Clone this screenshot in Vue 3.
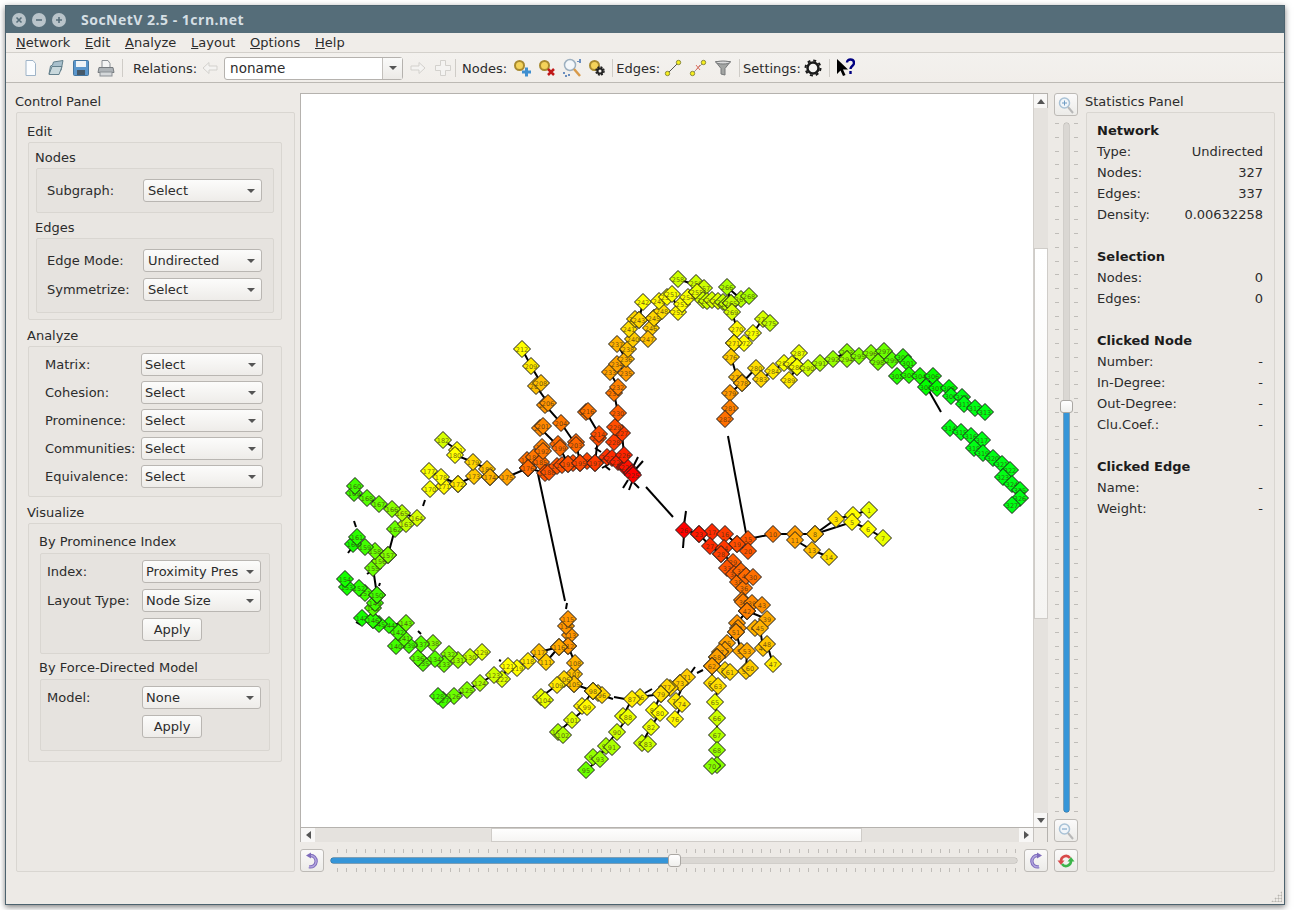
<template>
  <div class="window">
    <header class="titlebar">
      <span class="wbtn"><svg viewBox="0 0 14 14"><path d="M4.5 4.5l5 5M9.5 4.5l-5 5" /></svg></span>
      <span class="wbtn"><svg viewBox="0 0 14 14"><path d="M4 7h6" /></svg></span>
      <span class="wbtn"><svg viewBox="0 0 14 14"><path d="M4 7h6M7 4v6" /></svg></span>
      <span class="wtitle">SocNetV 2.5 - 1crn.net</span>
    </header>

    <nav class="menubar">
      <span v-for="m in menus" :key="m" class="menu"><u>{{ m[0] }}</u>{{ m.slice(1) }}</span>
    </nav>

    <div class="toolbar">
      <span class="grip"></span>
      <span class="ti"><svg width="16" height="18" viewBox="0 0 16 18"><path d="M3 1.500h7l2.500 3v12H3z" fill="#fbfdff" stroke="#9fb4c8" /></svg></span>
      <span class="ti"><svg width="18" height="18" viewBox="0 0 18 18"><path d="M2 15L3.500 7l2-1 1-3 9.500-1.500-2 10z" fill="#a9c0cc" stroke="#64808c" /><path d="M2 15.500l3-8h10l-3 8z" fill="#c9d8dc" stroke="#64808c" /></svg></span>
      <span class="ti"><svg width="18" height="18" viewBox="0 0 18 18"><rect x="1.500" y="1.500" width="15" height="15" rx="1" fill="#5a96cc" stroke="#44759f" /><rect x="4" y="2" width="10" height="6" fill="#eef3f7" /><rect x="5" y="11" width="8" height="5" fill="#45596a" /></svg></span>
      <span class="ti"><svg width="18" height="18" viewBox="0 0 18 18"><path d="M5 1.500h6l2 3v4H5z" fill="#f4f4f4" stroke="#8a8f94" /><path d="M2 8.500h14l1 5H1z" fill="#aeb3b7" stroke="#777c80" /><rect x="3" y="13" width="12" height="4" fill="#d5d8da" stroke="#8a8f94" /></svg></span>
      <span class="tsep s1"></span>
      <span class="tlabel">Relations:</span>
      <span class="ti"><svg width="16" height="14" viewBox="0 0 16 14"><path d="M1 7l6-5.500V5h8v4H7v3.500z" fill="#f4f3f1" stroke="#d3d1cd" /></svg></span>
      <div class="relcombo"><span class="reltext">noname</span><span class="relbtn"><i class="caret"></i></span></div>
      <span class="ti ml2"><svg width="16" height="14" viewBox="0 0 16 14"><path d="M15 7L9 1.500V5H1v4h8v3.500z" fill="#f4f3f1" stroke="#d3d1cd" /></svg></span>
      <span class="ti"><svg width="18" height="18" viewBox="0 0 18 18"><path d="M6.500 1.500h5v5h5v5h-5v5h-5v-5h-5v-5h5z" fill="#f4f3f1" stroke="#d3d1cd" /></svg></span>
      <span class="tsep s2"></span>
      <span class="tlabel">Nodes:</span>
      <span class="ti ml2"><svg width="18" height="18" viewBox="0 0 18 18"><circle cx="6.500" cy="6.500" r="4.500" fill="#f4d35a" stroke="#a88a30" stroke-width="2" /><path d="M9 11.500h3v-3h3v3h3v3h-3v3h-3v-3H9z" fill="#3f8fd0" /></svg></span>
      <span class="ti"><svg width="18" height="18" viewBox="0 0 18 18"><circle cx="6.500" cy="6.500" r="4.500" fill="#f4d35a" stroke="#a88a30" stroke-width="2" /><path d="M10 10l6 6M16 10l-6 6" stroke="#c01818" stroke-width="2.500" /></svg></span>
      <span class="ti"><svg width="20" height="20" viewBox="0 0 20 20"><circle cx="8" cy="7" r="5.500" fill="#f4f7fa" stroke="#9db0c0" stroke-width="1.500" /><path d="M12 11l6 7" stroke="#d89a4a" stroke-width="2.500" /><path d="M18 1v4M16 3v1M1 15h2M3 18h2M6 17h2" stroke="#3f6fb0" stroke-width="1.500" /></svg></span>
      <span class="ti"><svg width="18" height="18" viewBox="0 0 18 18"><circle cx="6.500" cy="6.500" r="4.500" fill="#f4d35a" stroke="#a88a30" stroke-width="2" /><circle cx="12" cy="12" r="2.500" fill="none" stroke="#222" stroke-width="2" /><circle cx="12" cy="12" r="4" fill="none" stroke="#222" stroke-width="1.500" stroke-dasharray="2 1.150" /></svg></span>
      <span class="tsep s3"></span>
      <span class="tlabel">Edges:</span>
      <span class="ti"><svg width="18" height="18" viewBox="0 0 18 18"><path d="M4 14L14 4" stroke="#555" /><circle cx="3.500" cy="14.500" r="2.200" fill="#f6ee1c" stroke="#8a8a40" /><circle cx="14.500" cy="3.500" r="2.200" fill="#f6ee1c" stroke="#8a8a40" /></svg></span>
      <span class="ti"><svg width="18" height="18" viewBox="0 0 18 18"><path d="M4 14L14 4" stroke="#999" /><path d="M7 6l4 5M11 6l-4 5" stroke="#e07060" /><circle cx="3.500" cy="14.500" r="2.200" fill="#f6ee1c" stroke="#8a8a40" /><circle cx="14.500" cy="3.500" r="2.200" fill="#f6ee1c" stroke="#8a8a40" /></svg></span>
      <span class="ti"><svg width="18" height="18" viewBox="0 0 18 18"><path d="M1.500 2.500h15L11 9.500V16l-4-1V9.500z" fill="#a3a5a3" stroke="#77797a" /><ellipse cx="9" cy="3.500" rx="7" ry="1.500" fill="#dcdcdc" stroke="#77797a" /></svg></span>
      <span class="tsep s4"></span>
      <span class="tlabel">Settings:</span>
      <span class="ti"><svg width="18" height="18" viewBox="0 0 18 18"><circle cx="9" cy="9" r="5.500" fill="#f4f3f1" stroke="#1a1a1a" stroke-width="2.500" /><circle cx="9" cy="9" r="7.500" fill="none" stroke="#1a1a1a" stroke-width="2" stroke-dasharray="3 2.890" /></svg></span>
      <span class="tsep s5"></span>
      <span class="ti"><svg width="20" height="20" viewBox="0 0 20 20"><path d="M2 1v15l3.500-3.500L8 18l2.500-1L8 11.500h5z" fill="#000" /><path d="M12 4.500c0-4 7-4 7 .5 0 3-3.500 3-3.500 6M15.500 13v3" fill="none" stroke="#000080" stroke-width="2.400" /></svg></span>
    </div>

    <main class="content">
      <section class="leftpane">
        <div class="panetitle">Control Panel</div>
        <div class="box outer">
          <div class="grouptitle first">Edit</div>
          <div class="box mid edit">
            <div class="subtitle">Nodes</div>
            <div class="box inner">
              <div class="row"><label>Subgraph:</label><div class="combo"><span>Select</span><i class="caret"></i></div></div>
            </div>
            <div class="subtitle gap">Edges</div>
            <div class="box inner tall">
              <div class="row"><label>Edge Mode:</label><div class="combo"><span>Undirected</span><i class="caret"></i></div></div>
              <div class="row"><label>Symmetrize:</label><div class="combo"><span>Select</span><i class="caret"></i></div></div>
            </div>
          </div>

          <div class="grouptitle">Analyze</div>
          <div class="box mid analyze">
            <div v-for="a in analyzeRows" :key="a" class="row">
              <label>{{ a }}:</label><div class="combo"><span>Select</span><i class="caret"></i></div>
            </div>
          </div>

          <div class="grouptitle">Visualize</div>
          <div class="box mid visualize">
            <div class="vistitle">By Prominence Index</div>
            <div class="box vis">
              <div class="row"><label>Index:</label><div class="combo"><span>Proximity Pres</span><i class="caret"></i></div></div>
              <div class="row"><label>Layout Type:</label><div class="combo"><span>Node Size</span><i class="caret"></i></div></div>
              <div class="row"><label></label><button class="apply">Apply</button></div>
            </div>
            <div class="vistitle gap">By Force-Directed Model</div>
            <div class="box vis">
              <div class="row"><label>Model:</label><div class="combo"><span>None</span><i class="caret"></i></div></div>
              <div class="row"><label></label><button class="apply">Apply</button></div>
            </div>
          </div>
        </div>
      </section>

      <section class="centerpane">
        <div class="viewrow">
          <div class="view">
            <div class="viewtop">
              <svg class="graph" viewBox="301 94 732 733" width="732" height="733">
                <g stroke="#000" stroke-width="2" fill="none">
                  <template v-for="(c, i) in chains" :key="'c' + i">
                    <polyline :points="c.map(n => n[0] + ',' + n[1]).join(' ')" />
                  </template>
                  <line v-for="(s, i) in stubs" :key="'s' + i" :x1="s[0]" :y1="s[1]" :x2="s[2]" :y2="s[3]" />
                </g>
                <g v-for="n in nodes" :key="n[0] + '-' + n[1] + '-' + n[3]">
                  <polygon :points="diamond(n)" :fill="'hsl(' + n[2] + ',100%,50%)'" stroke="#1c1c1c" stroke-width="1" />
                  <text :x="n[0]" :y="n[1] + 2.500" class="nlabel">{{ n[3] }}</text>
                </g>
              </svg>
              <div class="vscroll">
                <span class="sbtn"><i class="arr up"></i></span>
                <span class="trough t1"></span>
                <span class="thumb t2"></span>
                <span class="trough t3"></span>
                <span class="sbtn"><i class="arr down"></i></span>
              </div>
            </div>
            <div class="hscroll">
              <span class="sbtn"><i class="arr left"></i></span>
              <span class="trough h1"></span>
              <span class="thumb h2"></span>
              <span class="trough h3"></span>
              <span class="sbtn"><i class="arr right"></i></span>
              <span class="corner"></span>
            </div>
          </div>
          <div class="zoomcol">
            <button class="tool"><svg width="18" height="18" viewBox="0 0 18 18"><circle cx="7.500" cy="7" r="5" fill="#f1f5f9" stroke="#a9c2d6" stroke-width="1.500" /><path d="M5 7h5M7.500 4.500v5" stroke="#6f9cc4" /><path d="M11 11l5 6" stroke="#b8b8b8" stroke-width="2" /></svg></button>
            <div class="vslider">
              <div class="vticks"><i v-for="t in 51" :key="t"></i></div>
              <div class="vtrack"></div>
              <div class="vticks"><i v-for="t in 51" :key="t"></i></div>
              <div class="vfill"></div>
              <div class="vhandle"></div>
            </div>
            <button class="tool"><svg width="18" height="18" viewBox="0 0 18 18"><circle cx="7.500" cy="7" r="5" fill="#f1f5f9" stroke="#a9c2d6" stroke-width="1.500" /><path d="M5 7h5" stroke="#6f9cc4" /><path d="M11 11l5 6" stroke="#b8b8b8" stroke-width="2" /></svg></button>
          </div>
        </div>
        <div class="rotaterow">
          <button class="tool"><svg width="18" height="18" viewBox="0 0 18 18"><path d="M7 3.500a5.700 5.700 0 1 1-1 11.200" fill="none" stroke="#7f6cbc" stroke-width="3.400" /><path d="M7 3.500a5.700 5.700 0 1 1-1 11.200" fill="none" stroke="#b4a8e0" stroke-width="1.400" /><path d="M3 3.500L8 .5v6z" fill="#7f6cbc" /></svg></button>
          <div class="hslider">
            <div class="hticks"><i v-for="t in 73" :key="t"></i></div>
            <div class="htrack"></div>
            <div class="hticks"><i v-for="t in 73" :key="t"></i></div>
            <div class="hfill"></div>
            <div class="hhandle"></div>
          </div>
          <button class="tool"><svg width="18" height="18" viewBox="0 0 18 18"><path d="M11 3.500a5.700 5.700 0 1 0 1 11.200" fill="none" stroke="#7f6cbc" stroke-width="3.400" /><path d="M11 3.500a5.700 5.700 0 1 0 1 11.200" fill="none" stroke="#b4a8e0" stroke-width="1.400" /><path d="M15 3.500L10 .5v6z" fill="#7f6cbc" /></svg></button>
          <button class="tool reset"><svg width="18" height="18" viewBox="0 0 18 18"><path d="M4 9a5 5 0 0 1 9-3" fill="none" stroke="#d84a4a" stroke-width="2.600" /><path d="M.5 8.500h7L4 13z" fill="#d84a4a" /><path d="M14 9a5 5 0 0 1-9 3" fill="none" stroke="#3cb54a" stroke-width="2.600" /><path d="M10.500 9.500h7L14 5z" fill="#3cb54a" /></svg></button>
        </div>
      </section>

      <section class="rightpane">
        <div class="panetitle">Statistics Panel</div>
        <div class="box stats">
          <template v-for="(r, i) in stats" :key="i">
            <div v-if="r.head" class="strow head">{{ r.head }}</div>
            <div v-else-if="r.k" class="strow"><span>{{ r.k }}</span><span>{{ r.v }}</span></div>
            <div v-else class="strow"></div>
          </template>
        </div>
      </section>
    </main>

    <footer class="statusbar"><span class="sizegrip"></span></footer>
  </div>
</template>

<script setup>
const menus = ['Network', 'Edit', 'Analyze', 'Layout', 'Options', 'Help']
const analyzeRows = ['Matrix', 'Cohesion', 'Prominence', 'Communities', 'Equivalence']

const stats = [
  { head: 'Network' },
  { k: 'Type:', v: 'Undirected' },
  { k: 'Nodes:', v: '327' },
  { k: 'Edges:', v: '337' },
  { k: 'Density:', v: '0.00632258' },
  {},
  { head: 'Selection' },
  { k: 'Nodes:', v: '0' },
  { k: 'Edges:', v: '0' },
  {},
  { head: 'Clicked Node' },
  { k: 'Number:', v: '-' },
  { k: 'In-Degree:', v: '-' },
  { k: 'Out-Degree:', v: '-' },
  { k: 'Clu.Coef.:', v: '-' },
  {},
  { head: 'Clicked Edge' },
  { k: 'Name:', v: '-' },
  { k: 'Weight:', v: '-' }
]

// x, y, hue, label - page coordinates read off the screenshot
const chains = [
  // right arm
  [[684,530,0,26],[699,534,6,23],[712,532,10,17],[725,534,14,16],[737,544,18,19],[748,539,20,15],[773,534,28,10],[795,534,36,9],[815,534,44,8],[836,519,53,3],[853,515,60,2],[869,510,65,1]],
  [[795,540,38,11],[812,550,44,13],[829,557,52,14]],
  [[815,534,44,8],[852,522,58,5],[868,529,60,6],[883,538,65,7]],
  [[748,551,20,20],[737,544,18,19]],
  [[699,534,6,23],[710,546,10,27],[721,554,15,28],[724,548,13,24]],
  // down the right side
  [[721,554,15,28],[733,562,22,29],[727,568,20,33],[734,574,22,34],[738,582,26,35],[744,588,28,36],[742,600,30,40],[747,611,30,42]],
  [[741,571,24,37],[746,576,25,41],[753,577,26,30]],
  [[743,602,30,38],[752,603,32,39],[762,605,34,43]],
  [[747,611,30,42],[767,619,40,39],[755,628,42,44],[760,628,42,45],[763,648,46,46],[767,644,46,48],[773,664,55,47]],
  [[747,611,30,42],[737,623,35,49],[738,628,35,50],[736,632,35,51],[727,643,38,55],[725,650,38,56],[720,652,38,57],[717,657,38,58]],
  [[736,632,35,51],[741,651,40,52],[747,651,40,53],[746,671,48,54],[750,668,48,60]],
  [[717,657,38,58],[712,666,38,62],[725,670,50,59],[730,672,50,61]],
  [[712,666,38,62],[712,683,52,64],[718,686,52,63],[715,702,65,65],[717,718,72,66],[717,735,78,67],[717,750,85,68],[717,765,88,69],[712,766,88,70]],
  // bottom fans
  [[680,683,48,73],[687,677,48,71],[676,701,55,75],[682,704,55,74],[675,719,58,76]],
  [[680,683,48,73],[670,688,50,72],[667,687,50,77],[661,694,52,79],[654,710,60,81],[660,713,60,80],[651,727,65,82],[642,743,72,84],[648,744,72,83]],
  [[661,694,52,79],[640,697,55,86],[632,699,55,87],[623,716,65,89],[628,717,65,88],[617,732,72,90],[606,746,80,92],[612,747,80,91],[593,757,85,94],[600,759,85,93],[586,770,95,95]],
  [[593,691,50,98],[598,693,50,97],[602,695,50,96]],
  [[593,691,50,98],[582,706,58,100],[587,707,58,99],[572,720,68,101],[558,732,80,103],[563,735,80,102]],
  [[593,691,50,98],[574,684,45,105],[574,674,45,107],[575,663,42,108],[568,646,35,112],[570,635,35,113],[566,626,35,114],[568,619,35,115]],
  [[574,684,45,105],[564,679,50,106],[557,685,55,109],[541,697,65,110],[545,700,65,104]],
  [[568,646,35,112],[559,647,40,116],[539,652,45,117],[528,661,55,118],[517,668,60,119],[508,666,60,121],[502,679,68,122],[494,675,72,123],[480,683,80,124],[467,690,90,125],[454,696,95,126],[443,700,105,127],[438,696,105,128]],
  [[559,647,40,116],[546,662,48,111]],
  // left loop, bottom to top
  [[482,652,68,129],[470,657,75,130],[458,660,85,131],[449,654,90,132],[444,664,95,133],[435,659,100,134],[423,663,100,135],[418,658,100,136]],
  [[433,643,90,138],[421,644,100,137],[409,645,105,139],[396,646,105,140],[404,638,100,141],[398,632,105,142],[406,623,95,143],[389,625,110,144],[379,624,110,145],[373,620,110,146],[362,618,115,147]],
  [[373,620,110,146],[373,608,100,148],[375,603,105,149],[377,595,105,150],[365,593,105,151],[359,588,110,152],[347,587,115,153],[345,579,115,154]],
  [[377,595,105,150],[373,568,95,155],[380,561,90,156],[388,555,90,157],[375,551,95,158],[365,547,105,159],[353,544,115,160],[357,537,110,161]],
  [[388,555,90,157],[395,529,95,162],[406,524,75,163],[417,518,70,164],[402,513,78,165],[392,509,88,166],[379,504,95,167],[367,498,100,168],[354,493,105,169],[355,486,105,160]],
  // left arm towards the hub
  [[430,489,62,170],[444,486,58,171],[458,484,55,172],[474,476,47,173],[490,477,42,174],[507,477,38,175],[528,468,25,176]],
  [[429,471,62,177],[441,477,60,178],[458,484,55,172]],
  [[443,440,70,182],[457,450,60,181],[455,455,60,180],[473,462,50,179],[487,469,45,183],[490,477,42,174]],
  [[528,468,25,176],[527,460,26,184],[534,457,28,186],[541,462,25,185],[542,447,30,191],[543,451,28,192]],
  [[528,468,25,176],[545,473,20,187],[549,472,20,188],[557,466,20,189],[562,465,19,190],[568,464,19,193],[573,463,18,194],[580,463,17,195],[587,461,16,196],[595,463,14,197],[607,457,12,219],[612,458,10,220],[618,462,8,221],[625,467,4,222],[627,467,4,223],[632,473,2,224],[633,475,0,225]],
  // spikes off the hub
  [[568,464,19,193],[558,444,25,198],[560,448,25,199],[540,428,32,200],[543,426,32,201]],
  [[580,463,17,195],[576,442,24,202],[576,445,24,203],[561,423,28,204],[545,405,35,205],[548,403,35,206],[536,386,45,207],[541,383,45,208],[531,366,55,209],[522,349,60,212]],
  [[595,463,14,197],[598,438,18,213],[599,434,18,214],[586,412,27,215],[588,411,27,216]],
  // top arc, left side
  [[624,455,8,226],[622,433,14,227],[614,442,14,228],[615,427,18,229],[618,413,22,230],[614,393,28,231],[618,387,30,232],[610,372,38,233],[617,364,38,234],[626,373,36,235],[626,359,42,236],[617,344,42,237],[628,349,45,238],[633,339,48,240],[629,329,52,241],[639,320,50,243],[635,319,50,244],[654,318,50,245],[651,328,48,246],[648,339,45,247]],
  [[639,320,50,243],[643,302,60,242]],
  [[654,318,50,245],[662,311,52,248],[659,301,58,249],[667,297,60,250],[672,294,62,251],[678,312,58,252],[682,304,60,253],[688,297,62,254],[697,292,66,255],[696,283,72,256],[704,288,72,257],[678,279,72,258]],
  // top arc, right side
  [[697,292,66,255],[703,300,72,259],[707,301,72,260],[712,300,70,261],[718,301,68,262],[723,302,75,263],[727,304,75,264],[731,303,75,265],[727,287,80,266],[741,299,78,267],[749,296,82,268]],
  [[731,303,75,265],[732,312,70,269],[737,329,58,270],[734,343,55,271],[744,343,60,272],[753,333,62,273],[763,319,70,274],[770,323,75,275]],
  [[734,343,55,271],[731,357,48,276],[737,377,44,277],[742,383,42,278],[730,393,36,279],[730,408,30,281],[725,419,26,282]],
  [[742,383,42,278],[756,368,52,280],[761,379,50,283],[773,371,55,284],[784,363,62,285],[792,364,62,286],[799,353,65,287],[797,367,62,288],[789,380,55,289]],
  // long green arm on the upper right
  [[797,367,62,288],[808,368,72,290],[820,363,80,291],[833,359,85,292],[847,352,88,293],[847,359,85,294],[859,356,90,295],[871,353,90,296],[884,351,95,297],[878,362,93,298],[892,360,100,299],[903,357,110,300],[908,363,112,301]],
  [[897,376,112,302],[909,375,112,303],[920,376,115,304],[926,387,120,305],[933,376,118,306],[937,388,120,307],[949,388,122,308],[951,396,124,309],[962,397,125,310],[964,404,125,311],[975,408,125,312],[985,412,125,313]],
  [[950,428,125,314],[961,432,125,315],[971,436,125,316],[982,440,125,317],[974,448,125,318],[983,453,125,319],[993,458,125,320],[1002,464,125,321],[1010,470,125,322],[1003,477,125,323],[1012,484,125,324],[1020,490,125,325],[1020,498,125,326],[1012,505,125,327]]
]

const stubs = [
  [646,487,673,517],[538,474,565,601],[728,436,746,533],[929,391,941,412],
  [638,457,633,467],[643,461,635,470],[623,488,628,480],[629,490,632,482],[639,488,634,483],
  [686,511,684,525],[683,548,684,535],
  [425,500,423,506],[418,631,421,634],[499,660,501,661],[567,603,566,609],
  [695,667,690,674],[697,673,703,670],[614,697,625,699],[645,693,652,689],[607,697,613,699],
  [532,458,526,453],[595,448,601,452],[610,470,605,466],[609,464,602,468],
  [354,521,356,527],[348,553,351,549],[367,574,370,572],[379,586,380,583],[356,622,361,625]
]

const nodes = chains.flat()

function diamond(n) {
  const [x, y] = n
  return `${x},${y - 8.5} ${x + 8.5},${y} ${x},${y + 8.5} ${x - 8.5},${y}`
}
</script>

<style>
html, body {
  margin: 0;
  background: #fff;
}
</style>

<style scoped>
.window {
  box-sizing: border-box;
  width: 1280px;
  height: 900px;
  margin: 5px;
  border: 1px solid #4c626e;
  background: #edeae6;
  color: #2c2c2c;
  font: 13px "DejaVu Sans", sans-serif;
  display: flex;
  flex-direction: column;
  box-shadow: 0 2px 6px rgba(0, 0, 0, 0.5);
}

.titlebar {
  height: 27px;
  background: #556d79;
  display: flex;
  align-items: center;
  padding-left: 6px;
  gap: 6px;
  flex: none;
}

.wbtn {
  width: 14px;
  height: 14px;
  border-radius: 50%;
  background: #b9c4ca;
  display: block;
}

.wbtn svg {
  display: block;
  stroke: #556d79;
  stroke-width: 1.6;
  fill: none;
}

.wtitle {
  margin-left: 9px;
  font: bold 14px "Open Sans", sans-serif;
  color: #d5dfe4;
  letter-spacing: 0.5px;
}

.menubar {
  height: 19px;
  padding-left: 2.6px;
  display: flex;
  align-items: center;
  background: #f0ede9;
  flex: none;
}

.menu {
  padding: 0 7.4px;
}

.toolbar {
  height: 31px;
  box-sizing: border-box;
  padding-top: 1px;
  border-top: 1px solid #d3d0cb;
  border-bottom: 1px solid #bcb9b4;
  background: linear-gradient(#f3f1ee, #f1eeea);
  display: flex;
  align-items: center;
  flex: none;
}

.grip {
  width: 5px;
  height: 20px;
  margin: 0 3px 0 4px;
  background-image: radial-gradient(#bbb8b3 40%, transparent 45%);
  background-size: 2px 2px;
}

.ti {
  width: 25px;
  height: 22px;
  display: flex;
  align-items: center;
  justify-content: center;
  flex: none;
}

.ml2 {
  margin-left: 2px;
}

.tsep {
  width: 1px;
  height: 18px;
  background: #cfccc7;
  flex: none;
}

.s1 { margin: 0 10px 0 4px; }
.s2 { margin: 0 6px 0 0; }
.s3 { margin: 0 3px 0 3px; }
.s4 { margin: 0 3px 0 4px; }
.s5 { margin: 0 3px 0 3px; }

.tlabel {
  flex: none;
}

.relcombo {
  box-sizing: border-box;
  width: 179px;
  height: 23px;
  margin-left: 2px;
  border: 1px solid #b5b2ae;
  border-radius: 3px;
  background: #fff;
  display: flex;
  align-items: center;
  flex: none;
}

.reltext {
  flex: 1;
  padding-left: 5px;
  font-size: 13.5px;
}

.relbtn {
  width: 19px;
  height: 100%;
  border-left: 1px solid #c3c0bc;
  background: linear-gradient(#fafaf9, #eceae7);
  display: flex;
  align-items: center;
  justify-content: center;
}

.caret {
  display: inline-block;
  width: 0;
  height: 0;
  border-left: 4px solid transparent;
  border-right: 4px solid transparent;
  border-top: 4px solid #555;
}

.content {
  flex: 1;
  display: flex;
  padding: 10px 9px 0;
  min-height: 0;
}

.leftpane {
  width: 285px;
  flex: none;
  display: flex;
  flex-direction: column;
  height: 779px;
}

.panetitle {
  height: 19px;
  line-height: 17px;
  flex: none;
}

.box {
  box-sizing: border-box;
  border: 1px solid #d9d6d1;
  border-radius: 2px;
}

.outer {
  width: 279px;
  margin-left: 1px;
  height: 760px;
  padding: 10px 11px 0;
  background: #ebe8e4;
}

.grouptitle {
  height: 20px;
  line-height: 19px;
  margin-top: 6px;
  margin-left: -1px;
}

.grouptitle.first {
  height: 19px;
  line-height: 18px;
  margin-top: 0;
}

.mid {
  width: 254px;
  background: #e9e6e2;
}

.edit {
  padding: 5px 7px 6px;
}

.subtitle {
  height: 20px;
  line-height: 20px;
  margin-left: -1px;
}

.subtitle.gap {
  margin-top: 5px;
}

.inner {
  background: #e6e3df;
  padding: 10px 11px 10px 10px;
  display: flex;
  flex-direction: column;
  gap: 6px;
}

.tall {
  padding-bottom: 11px;
}

.row {
  display: flex;
  align-items: center;
  height: 23px;
}

.row label {
  flex: none;
}

.inner label {
  width: 96px;
}

.combo {
  box-sizing: border-box;
  height: 23px;
  border: 1px solid #b9b6b2;
  border-radius: 3px;
  background: linear-gradient(#fcfcfb, #eeece9);
  display: flex;
  align-items: center;
  justify-content: space-between;
  padding: 0 6px 0 4px;
  white-space: nowrap;
  overflow: hidden;
}

.inner .combo {
  width: 119px;
}

.analyze {
  height: 151px;
  padding: 6px 18px 0 16px;
  display: flex;
  flex-direction: column;
  gap: 5px;
}

.analyze label {
  width: 96px;
}

.analyze .combo {
  width: 122px;
  padding-left: 3px;
}

.visualize {
  height: 239px;
  padding: 9px 11px 0;
}

.vistitle {
  height: 20px;
  line-height: 18px;
  margin-left: -1px;
}

.vistitle.gap {
  margin-top: 5px;
}

.vis {
  background: #e6e3df;
  padding: 6px 8px 12px 6px;
  display: flex;
  flex-direction: column;
  gap: 6px;
}

.vis label {
  width: 95px;
}

.vis .combo {
  width: 119px;
  padding-left: 3px;
}

.apply {
  box-sizing: border-box;
  width: 60px;
  height: 23px;
  border: 1px solid #b9b6b2;
  border-radius: 3px;
  background: linear-gradient(#fcfcfb, #eeece9);
  font: inherit;
  color: inherit;
  padding: 0;
}

.centerpane {
  width: 778px;
  flex: none;
  display: flex;
  flex-direction: column;
  height: 779px;
}

.viewrow {
  display: flex;
  gap: 6px;
  height: 749px;
  flex: none;
}

.view {
  box-sizing: border-box;
  width: 748px;
  height: 749px;
  border: 1px solid #b5b2ae;
  display: flex;
  flex-direction: column;
}

.viewtop {
  display: flex;
  height: 733px;
  flex: none;
}

.graph {
  display: block;
  background: #fff;
  flex: none;
}

.nlabel {
  font: 6.5px "DejaVu Sans", sans-serif;
  text-anchor: middle;
  fill: rgba(60, 45, 20, 0.75);
}

.vscroll {
  width: 14px;
  border-left: 1px solid #d3d0cc;
  display: flex;
  flex-direction: column;
  flex: none;
}

.hscroll {
  height: 14px;
  border-top: 1px solid #b5b2ae;
  display: flex;
  flex: none;
}

.sbtn {
  width: 14px;
  height: 14px;
  background: #f8f7f6;
  display: flex;
  align-items: center;
  justify-content: center;
  flex: none;
}

.trough {
  background: #e5e2de;
  flex: none;
}

.thumb {
  background: linear-gradient(#fff, #f5f4f2);
  flex: none;
  box-shadow: inset 0 0 0 1px #cfccc8;
}

.vscroll .sbtn { width: 13px; }
.t1 { height: 140px; }
.t2 { height: 371px; }
.t3 { flex: 1; }

.h1 { width: 176px; }
.h2 { width: 371px; }
.h3 { flex: 1; }

.corner {
  width: 13px;
  flex: none;
  border-left: 1px solid #c5c2be;
  background: #edeae6;
}

.arr {
  width: 0;
  height: 0;
  display: block;
}

.up { border: 4px solid transparent; border-top: 0; border-bottom: 5px solid #555; }
.down { border: 4px solid transparent; border-bottom: 0; border-top: 5px solid #555; }
.left { border: 4px solid transparent; border-left: 0; border-right: 5px solid #555; }
.right { border: 4px solid transparent; border-right: 0; border-left: 5px solid #555; }

.zoomcol {
  width: 24px;
  display: flex;
  flex-direction: column;
  align-items: center;
  flex: none;
}

.tool {
  box-sizing: border-box;
  width: 24px;
  height: 23px;
  padding: 0;
  border: 1px solid #bdbab6;
  border-radius: 3px;
  background: linear-gradient(#fbfafa, #ecebe8);
  display: flex;
  align-items: center;
  justify-content: center;
  flex: none;
}

.reset {
  margin-left: 6px;
}

.vslider {
  position: relative;
  width: 24px;
  height: 689px;
  margin: 7px 0;
  flex: none;
  display: flex;
  justify-content: space-between;
  padding: 0 0 0 1px;
  box-sizing: border-box;
}

.vticks {
  width: 4px;
  height: 100%;
  display: flex;
  flex-direction: column;
  justify-content: space-between;
}

.vticks i {
  display: block;
  height: 1px;
  background: #c0bdb9;
}

.vtrack {
  width: 5px;
  height: 100%;
  background: #dad7d3;
  box-shadow: 0 0 0 0.5px #b5b2ae;
  border-radius: 3px;
}

.vfill {
  position: absolute;
  left: 10px;
  width: 5px;
  top: 283px;
  bottom: 0;
  background: #3595d8;
  box-shadow: 0 0 0 0.5px #2a6f9f;
  border-radius: 0 0 3px 3px;
}

.vhandle {
  position: absolute;
  left: 6px;
  top: 277px;
  width: 13px;
  height: 13px;
  box-sizing: border-box;
  background: linear-gradient(#fff, #f0efed);
  border: 1px solid #aaa7a3;
  border-radius: 3px;
}

.rotaterow {
  display: flex;
  align-items: center;
  height: 23px;
  margin-top: 7px;
  flex: none;
}

.hslider {
  position: relative;
  width: 686px;
  height: 23px;
  margin: 0 7px;
  flex: none;
  display: flex;
  flex-direction: column;
  justify-content: space-between;
}

.hticks {
  height: 4px;
  padding-left: 6px;
  display: flex;
  justify-content: space-between;
}

.hticks i {
  display: block;
  width: 1px;
  background: #c0bdb9;
}

.htrack {
  height: 5px;
  background: #dad7d3;
  box-shadow: 0 0 0 0.5px #b5b2ae;
  border-radius: 3px;
}

.hfill {
  position: absolute;
  left: 0;
  top: 9px;
  width: 340px;
  height: 5px;
  background: #3595d8;
  box-shadow: 0 0 0 0.5px #2a6f9f;
  border-radius: 3px 0 0 3px;
}

.hhandle {
  position: absolute;
  left: 337px;
  top: 5px;
  width: 13px;
  height: 13px;
  box-sizing: border-box;
  background: linear-gradient(#fff, #f0efed);
  border: 1px solid #aaa7a3;
  border-radius: 3px;
}

.rightpane {
  width: 190px;
  flex: none;
  margin-left: 7px;
  display: flex;
  flex-direction: column;
  height: 779px;
}

.stats {
  width: 189px;
  margin-left: 1px;
  height: 760px;
  padding: 7px 11px 0 10px;
  background: #ebe8e4;
}

.strow {
  height: 21px;
  line-height: 21px;
  display: flex;
  justify-content: space-between;
}

.head {
  font-weight: bold;
  color: #1c1c1c;
}

.statusbar {
  flex: 1;
  position: relative;
}

.sizegrip {
  position: absolute;
  right: 2px;
  bottom: 2px;
  width: 11px;
  height: 11px;
  background-image: radial-gradient(#b8b5b0 45%, transparent 50%);
  background-size: 3px 3px;
  clip-path: polygon(100% 0, 100% 100%, 0 100%);
}
</style>
